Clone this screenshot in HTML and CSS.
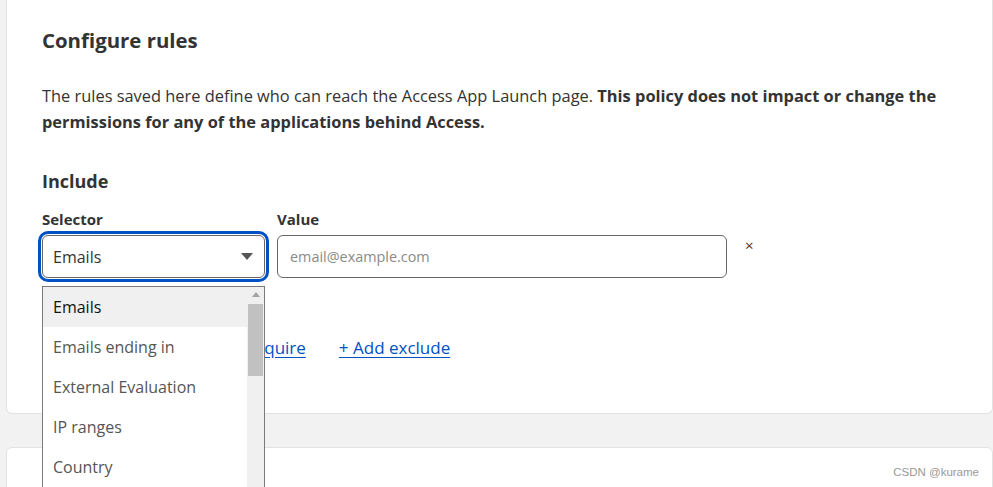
FILE: index.html
```html
<!DOCTYPE html>
<html lang="en">
<head>
  <meta charset="UTF-8">
  <title>Configure rules</title>
  <link rel="stylesheet" href="styles.css">
</head>
<body>
  <div class="page">
    <div class="card">
      <h2>Configure rules</h2>
      <p class="intro">The rules saved here define who can reach the Access App Launch page. <b>This policy does not impact or change the permissions for any of the applications behind Access.</b></p>

      <h3>Include</h3>
      <div class="rule-row">
        <div class="field">
          <label>Selector</label>
          <div class="select-wrap">
            <div class="select focused">
              <span>Emails</span>
              <span class="caret"></span>
            </div>
            <div class="options">
              <ul>
                <li class="hover">Emails</li>
                <li>Emails ending in</li>
                <li>External Evaluation</li>
                <li>IP ranges</li>
                <li>Country</li>
              </ul>
              <div class="scrollbar">
                <span class="arrow up"></span>
                <span class="thumb"></span>
                <span class="arrow down"></span>
              </div>
            </div>
          </div>
        </div>
        <div class="field">
          <label>Value</label>
          <input class="value-input" type="text" placeholder="email@example.com">
        </div>
        <button class="remove">&times;</button>
      </div>

      <div class="links">
        <a href="#">+ Add include</a>
        <a href="#">+ Add require</a>
        <a href="#">+ Add exclude</a>
      </div>
    </div>

    <div class="card next"></div>
  </div>
  <div class="watermark">CSDN @kurame</div>
</body>
</html>
```

FILE: styles.css
```css
*{margin:0;padding:0;box-sizing:border-box;}
body{background:#f2f2f2;font-family:'Open Sans','Noto Sans',sans-serif;color:#333;height:487px;overflow:hidden;}
.page{padding-left:6px;}
.card{background:#fff;border:1px solid #e2e2e2;border-top:none;border-radius:0 0 6px 6px;padding:26px 35px 53px;}
.card.next{margin-top:33px;border-top:1px solid #e2e2e2;border-radius:6px 6px 0 0;height:60px;padding:0;}
h2{font-size:20.4px;line-height:28px;font-weight:700;color:#333;}
.intro{font-size:16.4px;line-height:26px;margin-top:29px;color:#333;}
.intro b{font-weight:700;}
h3{font-size:18px;line-height:26px;font-weight:700;margin-top:33px;}
.rule-row{display:flex;align-items:flex-end;gap:12px;margin-top:14px;}
.field label{display:block;font-size:15px;line-height:22px;font-weight:700;margin-bottom:5px;}
.select-wrap{position:relative;width:223px;}
.select{height:43px;border:1px solid #666;border-radius:6px;display:flex;align-items:center;justify-content:space-between;padding:0 10px;font-size:16px;color:#333;background:#fff;}
.select.focused{outline:3px solid #0051c3;outline-offset:1px;}
.caret{width:0;height:0;border-left:6px solid transparent;border-right:6px solid transparent;border-top:7px solid #555;margin-right:1px;}
.value-input{width:450px;height:43px;border:1px solid #666;border-radius:6px;padding:0 12px;font-family:inherit;font-size:14.4px;color:#333;}
.value-input::placeholder{color:#8a8a8a;}
.remove{height:22px;margin:0 0 22px 6px;background:none;border:none;font-family:inherit;font-size:15px;line-height:22px;color:#5c2b12;cursor:pointer;}
.options{position:absolute;left:0;top:calc(100% + 8px);width:223px;height:210px;background:#fff;border:1px solid #7a7a7a;display:flex;z-index:2;}
.options ul{list-style:none;flex:1;}
.options li{height:40px;line-height:40px;padding-left:10px;font-size:16px;color:#555;}
.options li.hover{background:#f0f0f0;color:#111;}
.scrollbar{width:17px;background:#f0f0f0;display:flex;flex-direction:column;align-items:center;}
.scrollbar .arrow{width:0;height:0;border-left:4px solid transparent;border-right:4px solid transparent;margin:5px 0;}
.scrollbar .up{border-bottom:5px solid #a3a3a3;}
.scrollbar .down{border-top:5px solid #555;margin-top:auto;margin-bottom:2px;}
.scrollbar .thumb{width:15px;height:72px;background:#c1c1c1;margin-top:2px;}
.links{display:flex;gap:33px;margin-top:58px;font-size:17px;line-height:24px;}
.links a{color:#0051c3;text-decoration:underline;text-underline-offset:3px;}
.links a:first-child{margin-right:15px;}
.watermark{position:absolute;right:14px;top:466px;font-family:'Liberation Sans',Arial,sans-serif;font-size:11.5px;color:#999;}
```
